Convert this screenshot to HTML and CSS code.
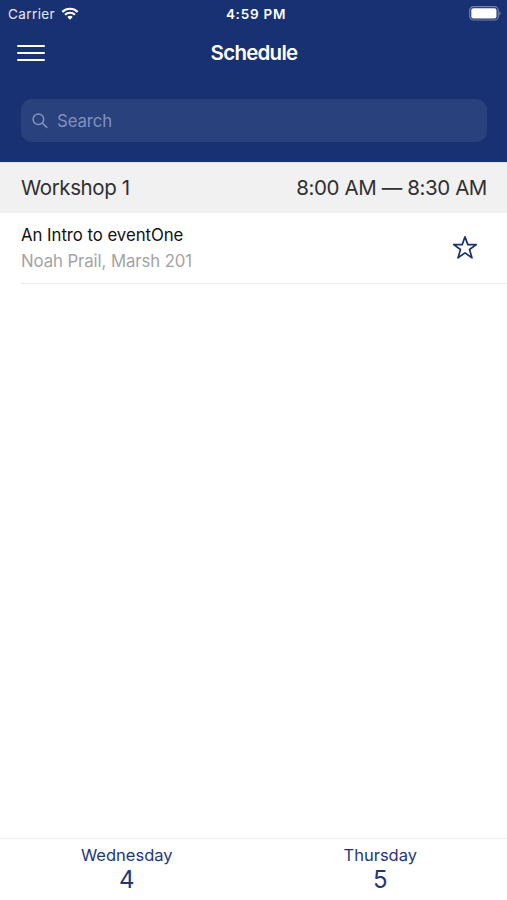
FILE: index.html
```
<!DOCTYPE html>
<html lang="en">
<head>
    <meta charset="UTF-8">
    <meta name="viewport" content="width=device-width, initial-scale=1.0">
    <title>Schedule</title>
    <link rel="stylesheet" href="styles.css">
</head>
<body>

    <header class="header">
        <div class="status-bar">
            <div class="carrier">
                <span>Carrier</span>
                <svg class="wifi" viewBox="0 0 18 13" width="18" height="13">
                    <path d="M1.3 4.9a11 11 0 0 1 15.4 0M4 7.8a7.1 7.1 0 0 1 10 0" fill="none" stroke="#fff" stroke-width="2.2"/>
                    <path d="M9 12.7 6.3 10a3.9 3.9 0 0 1 5.4 0z" fill="#fff"/>
                </svg>
            </div>
            <span class="time">4:59 PM</span>
            <svg class="battery" viewBox="0 0 32 15" width="32" height="15">
                <rect x="0.7" y="0.7" width="28.6" height="13.3" rx="3.8" fill="none" stroke="#fff" stroke-opacity="0.4" stroke-width="1.2"/>
                <rect x="2.3" y="2.3" width="25.2" height="10.1" rx="2" fill="#fff"/>
                <path d="M30.4 5.3v4.2c1.4-.6 1.4-3.6 0-4.2z" fill="#fff" fill-opacity="0.45"/>
            </svg>
        </div>
        <div class="nav-bar">
            <button class="menu-button" aria-label="Menu">
                <span></span>
                <span></span>
                <span></span>
            </button>
            <h1>Schedule</h1>
        </div>
        <div class="search">
            <svg viewBox="0 0 16 16" width="16" height="16" fill="none" stroke="#8092bd" stroke-width="1.5" stroke-linecap="round">
                <circle cx="6.4" cy="6.2" r="5.3"/>
                <path d="M10.4 10.2 14.8 14.4"/>
            </svg>
            <span>Search</span>
        </div>
    </header>

    <main class="content">
        <div class="section-header">
            <span class="section-name">Workshop 1</span>
            <span class="section-time">8:00 AM — 8:30 AM</span>
        </div>
        <div class="session">
            <div class="session-info">
                <div class="session-title">An Intro to eventOne</div>
                <div class="session-details">Noah Prail, Marsh 201</div>
            </div>
            <svg class="star" viewBox="0 0 26 25" width="26" height="25">
                <path d="M13 1.9 15.8 9.6H24.3L17.5 14.5 20 22.9 13 17.9 6 22.9 8.5 14.5 1.7 9.6H10.2Z" fill="none" stroke="#1a3173" stroke-width="1.7" stroke-linejoin="round"/>
            </svg>
        </div>
    </main>

    <footer class="days">
        <div class="day">
            <span class="day-name">Wednesday</span>
            <span class="day-number">4</span>
        </div>
        <div class="day">
            <span class="day-name">Thursday</span>
            <span class="day-number">5</span>
        </div>
    </footer>

</body>
</html>
```
FILE: styles.css
```
* {
    box-sizing: border-box;
}
body {
    margin: 0;
    height: 100vh;
    display: flex;
    flex-direction: column;
    font-family: Inter, "Liberation Sans", sans-serif;
    background-color: #fff;
    overflow: hidden;
}
.header {
    height: 162px;
    background-color: #183172;
    color: #fff;
}
.status-bar {
    display: grid;
    grid-template-columns: 1fr auto 1fr;
    align-items: center;
    height: 27px;
    padding: 0 6px 0 8px;
    font-size: 13.5px;
}
.carrier {
    display: flex;
    align-items: center;
    gap: 6px;
    color: #e6eaf4;
    letter-spacing: 0.4px;
}
.time {
    margin-left: 3px;
    font-size: 13.5px;
    font-weight: 600;
    letter-spacing: 0.75px;
}
.battery {
    justify-self: end;
}
.nav-bar {
    display: grid;
    grid-template-columns: 1fr auto 1fr;
    align-items: center;
    height: 52px;
    padding: 0 16px 0 17px;
}
.menu-button {
    display: flex;
    flex-direction: column;
    gap: 5px;
    width: 28px;
    padding: 0;
    border: none;
    background: none;
}
.menu-button span {
    width: 28px;
    height: 2.2px;
    border-radius: 1px;
    background-color: #fff;
}
h1 {
    margin: 0;
    padding-bottom: 2px;
    font-size: 20.5px;
    font-weight: 600;
    letter-spacing: -0.75px;
}
.search {
    display: flex;
    align-items: center;
    gap: 9px;
    height: 43px;
    margin: 20px 20px 0 21px;
    padding: 0 11px;
    border-radius: 11px;
    background-color: #29417c;
    color: #8092bd;
    font-size: 16.8px;
    letter-spacing: -0.1px;
}
.content {
    flex: 1;
}
.section-header {
    display: flex;
    justify-content: space-between;
    align-items: center;
    height: 51px;
    padding: 0 20px 2px 21px;
    border-top: 1px solid #dfe3ef;
    background-color: #f1f1f1;
    color: #303030;
    font-size: 20.5px;
    letter-spacing: -0.4px;
}
.session {
    display: flex;
    justify-content: space-between;
    height: 71px;
    margin-left: 21px;
    padding: 10px 29px 0 0;
    border-bottom: 1px solid #ebebeb;
}
.session-title {
    color: #111;
    font-size: 16.8px;
    line-height: 25px;
    letter-spacing: -0.05px;
}
.session-details {
    color: #a3a3a3;
    font-size: 16.8px;
    line-height: 26px;
    letter-spacing: -0.1px;
}
.star {
    margin-top: 12px;
}
.days {
    display: flex;
    height: 62px;
    border-top: 1px solid #ececec;
    color: #1f3778;
}
.day {
    flex: 1;
    display: flex;
    flex-direction: column;
    align-items: center;
    padding-top: 5px;
}
.day-name {
    font-size: 16.5px;
    line-height: 22px;
}
.day-number {
    font-size: 24px;
    line-height: 28px;
}
```
